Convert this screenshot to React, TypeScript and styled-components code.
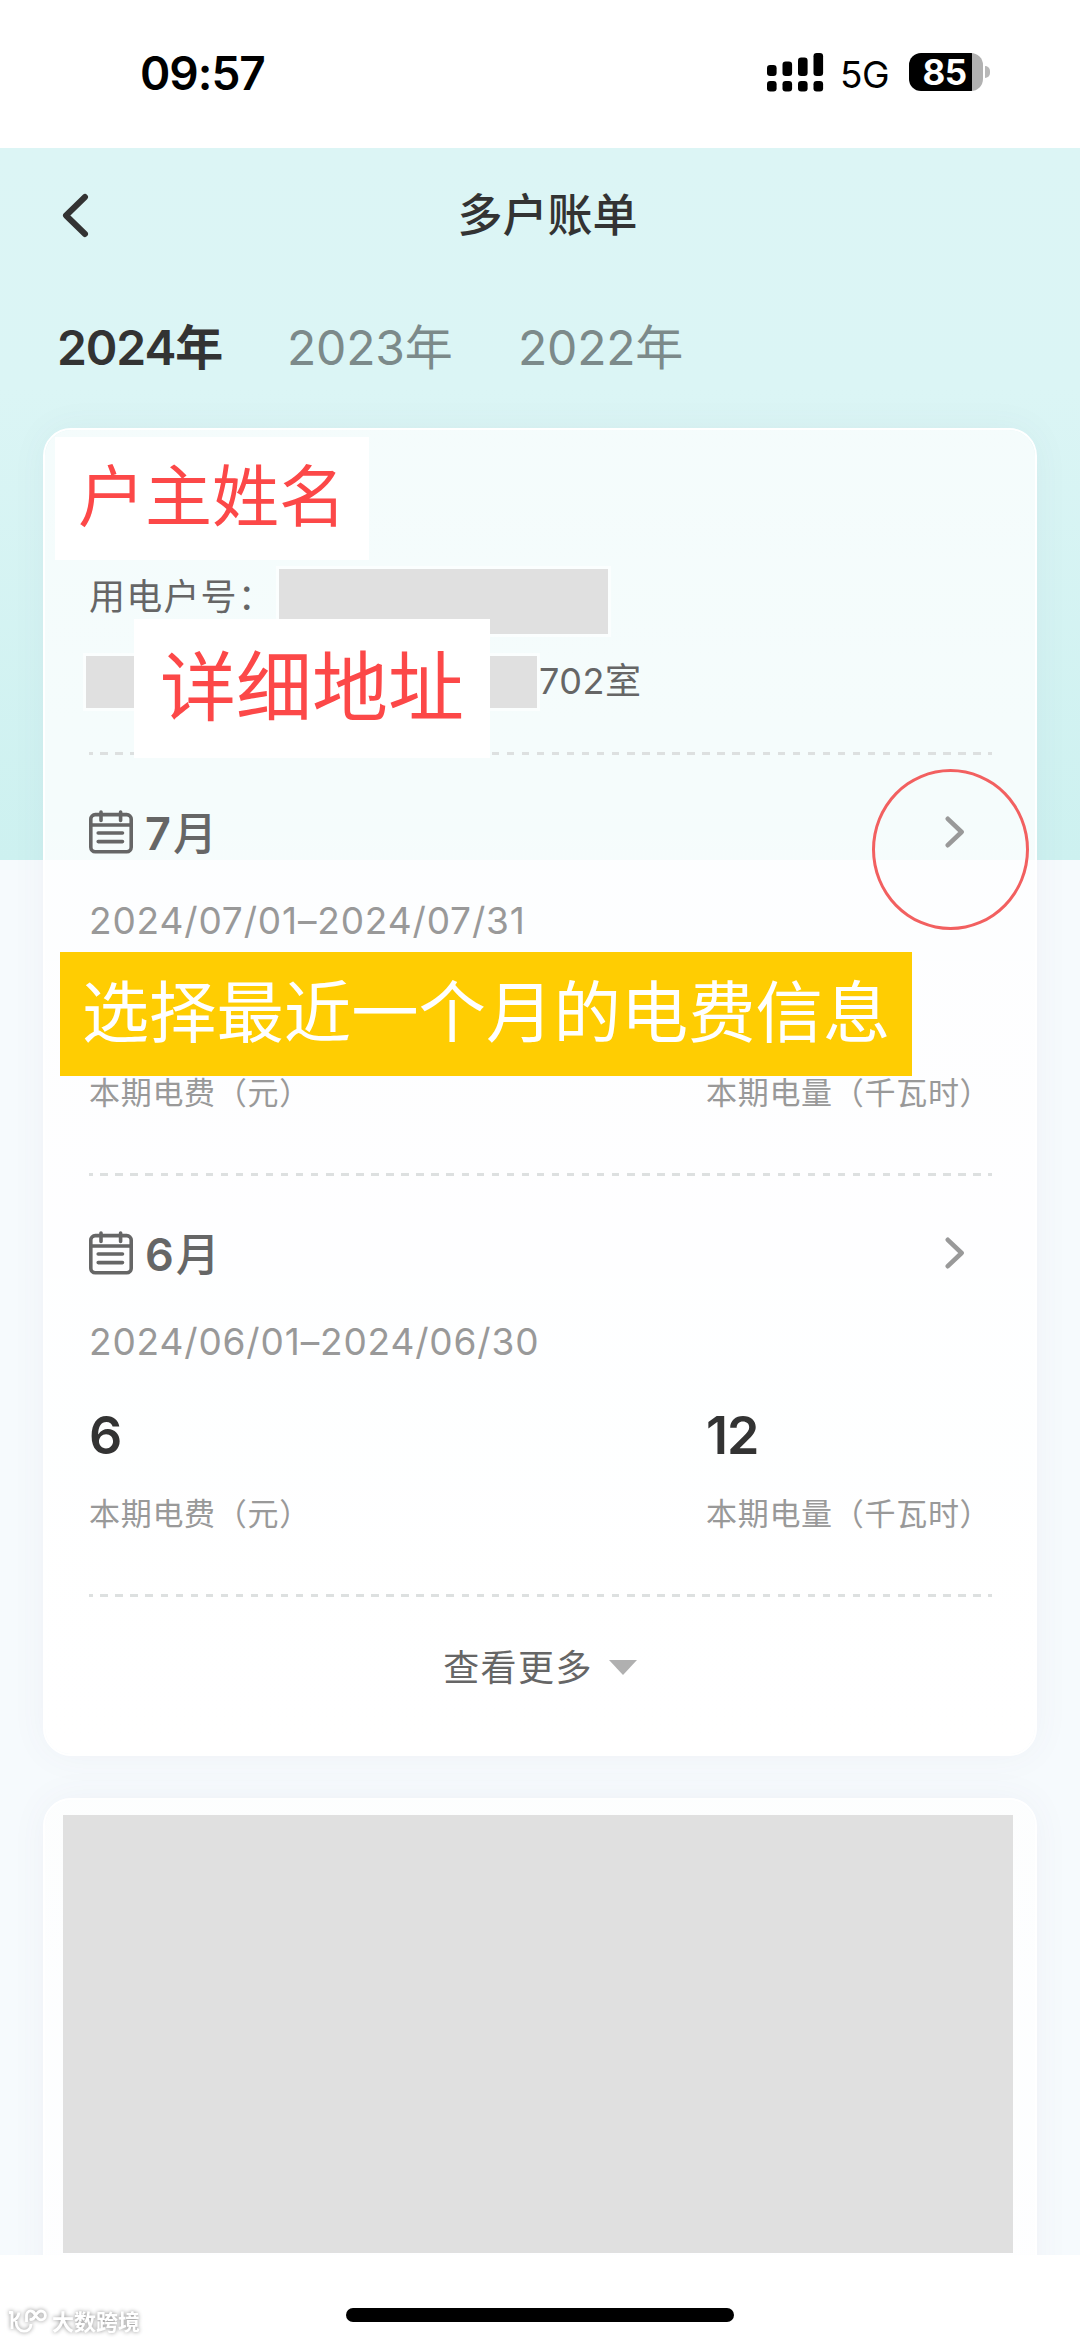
import React from "react";
import styled, { createGlobalStyle } from "styled-components";

const GlobalStyle = createGlobalStyle`
  * { box-sizing: border-box; }
  body {
    margin: 0;
    background: #fff;
    font-family: Inter, "Noto Sans CJK SC", sans-serif;
    color: #333;
  }
`;

const Screen = styled.div`
  position: relative;
  display: flex;
  flex-direction: column;
  width: 1080px;
  height: 2341px;
  overflow: hidden;
  background: #fff;
`;

const StatusBar = styled.header`
  display: flex;
  flex: none;
  justify-content: space-between;
  height: 148px;
  padding: 0 88px 0 140px;
  color: #000;
`;

const Clock = styled.time`
  height: 148px;
  font-size: 46px;
  font-weight: 600;
  line-height: 147px;
  letter-spacing: -1px;
`;

const StatusIcons = styled.div`
  display: flex;
  align-items: center;
  height: 144px;
  padding-right: 2px;
`;

const Network = styled.span`
  width: 67px;
  padding: 6px 0 0 16px;
  font-size: 37px;
  font-weight: 400;
  line-height: 40px;
  letter-spacing: -0.4px;
`;

const Battery = styled.div`
  display: flex;
  align-items: center;
  gap: 2px;
  margin-left: 18px;
`;

const BatteryBody = styled.div`
  width: 74px;
  height: 38px;
  padding: 0 3px 0 0;
  border-radius: 12px;
  background: linear-gradient(90deg, #000 0 63px, #b1b1b1 63px);
  color: #fff;
  font-size: 35px;
  font-weight: 700;
  line-height: 39px;
  text-align: center;
  letter-spacing: -0.5px;
`;

const BatteryTip = styled.div`
  width: 5px;
  height: 12px;
  border-radius: 0 6px 6px 0;
  background: #b8b8b8;
`;

const Page = styled.main`
  flex: none;
  height: 2107px;
  overflow: hidden;
  background: linear-gradient(180deg, #dcf5f5 0, #dbf5f5 240px, #cdf1f0 712px, #f6fafd 712px);
`;

const NavBar = styled.nav`
  display: grid;
  grid-template-columns: 60px 1fr 105px;
  align-items: center;
  height: 136px;
  padding: 0 0 1px 60px;
`;

const Title = styled.h1`
  margin: 0;
  font-size: 45px;
  font-weight: 500;
  line-height: 60px;
  text-align: center;
`;

const Tabs = styled.div`
  display: flex;
  height: 144px;
  padding-left: 57px;
`;

const Tab = styled.button<{ $active?: boolean }>`
  width: 231px;
  height: 128px;
  padding: 0;
  border: 0;
  background: none;
  color: ${(p) => (p.$active ? "#333" : "#7c8a8a")};
  font: ${(p) => (p.$active ? 600 : 400)} 48px/126px Inter, "Noto Sans CJK SC", sans-serif;
  letter-spacing: ${(p) => (p.$active ? "-1.1px" : "-0.2px")};
  text-indent: ${(p) => (p.$active ? "0" : "-1px")};
  text-align: left;
  white-space: nowrap;
`;

const Card = styled.section<{ $height: number }>`
  width: 994px;
  height: ${(p) => p.$height}px;
  margin: 0 0 42px 43px;
  border: 2px solid #fff;
  border-radius: 28px;
  background: linear-gradient(180deg, rgba(255, 255, 255, 0.72), #fff) padding-box;
  box-shadow: 0 0 36px rgba(90, 70, 120, 0.05);
`;

const Account = styled.div`
  height: 322px;
  padding: 139px 0 0 41px;
  color: #666;
  font-size: 36px;
`;

const AccountLine = styled.div`
  display: flex;
  align-items: flex-start;
  height: 87px;
`;

const AccountLabel = styled.span`
  width: 193px;
  padding-left: 3px;
  line-height: 56px;
  letter-spacing: 1.2px;
`;

const Redaction = styled.span<{ $w: number; $h: number }>`
  width: ${(p) => p.$w}px;
  height: ${(p) => p.$h}px;
  outline: 3px solid rgba(255, 255, 255, 0.6);
  background: #e0e0e0;
`;

const Room = styled.span`
  padding-left: 2px;
  line-height: 50px;
  letter-spacing: 0.5px;
`;

const Divider = styled.hr`
  width: 903px;
  height: 3px;
  margin: 0 0 0 44px;
  border: 0;
  background: repeating-linear-gradient(90deg, #dde0e0 0 3.7px, transparent 3.7px 11.3px, #dde0e0 11.3px 15.05px);
`;

const Bill = styled.article`
  height: 418px;
  padding: 47px 44px 0 44px;
`;

const BillHead = styled.div`
  display: flex;
  align-items: center;
  height: 60px;
  padding-right: 26px;
`;

const Month = styled.h2`
  flex: 1;
  margin: 0;
  padding-left: 12px;
  color: #666;
  font-size: 45px;
  font-weight: 600;
  line-height: 58px;
`;

const MonthUnit = styled.span`
  margin-left: 2px;
  font-family: "Noto Sans CJK SC", sans-serif;
  font-size: 44px;
  font-weight: 500;
`;

const Period = styled.p`
  margin: 31px 0 0;
  color: #999;
  font-size: 37px;
  line-height: 56px;
  letter-spacing: 0.85px;
`;

const Figures = styled.div`
  display: grid;
  grid-template-columns: 617px 1fr;
  margin-top: 31px;
`;

const Amount = styled.div`
  height: 70px;
  color: #333;
  font-size: 52px;
  font-weight: 600;
  line-height: 70px;
  letter-spacing: -1px;
`;

const Caption = styled.div`
  margin-top: 23px;
  color: #999;
  font-size: 31px;
  line-height: 40px;
  letter-spacing: 0.7px;
  white-space: nowrap;
`;

const More = styled.button`
  display: flex;
  align-items: center;
  justify-content: center;
  gap: 16px;
  width: 100%;
  height: 140px;
  padding: 0;
  border: 0;
  background: none;
  color: #666;
  font: 400 36px/136px "Noto Sans CJK SC", sans-serif;
  letter-spacing: 1.4px;
`;

const MoreLabel = styled.span`
  height: 140px;
`;

const HiddenBill = styled.div`
  width: 950px;
  height: 438px;
  margin: 15px 0 0 18px;
  background: #e0e0e0;
`;

const HomeArea = styled.footer`
  display: flex;
  flex: 1;
  align-items: flex-start;
  background: #fff;
`;

const Watermark = styled.div`
  display: flex;
  align-items: center;
  width: 346px;
  padding: 52px 0 0 8px;
  filter: drop-shadow(0 0 2px rgba(0, 0, 0, 0.45));
`;

const WatermarkText = styled.span`
  padding-left: 4px;
  color: #fff;
  font-size: 22px;
  font-weight: 700;
  line-height: 30px;
`;

const HomeIndicator = styled.div`
  width: 388px;
  height: 14px;
  margin-top: 53px;
  border-radius: 7px;
  background: #000;
`;

const Note = styled.div<{ $x: number; $y: number; $w: number; $h: number; $size: number; $fill?: string }>`
  position: absolute;
  left: ${(p) => p.$x}px;
  top: ${(p) => p.$y}px;
  width: ${(p) => p.$w}px;
  height: ${(p) => p.$h}px;
  background: ${(p) => p.$fill ?? "#fff"};
  color: ${(p) => (p.$fill ? "#fff" : "#fc4848")};
  font-size: ${(p) => p.$size}px;
  line-height: ${(p) => p.$h - 3}px;
  text-align: center;
  white-space: nowrap;
`;

const Ring = styled.div`
  position: absolute;
  left: 872px;
  top: 769px;
  width: 157px;
  height: 161px;
  border: 3px solid #f26060;
  border-radius: 50%;
`;

const SignalIcon = () => (
  <svg width="57" height="39" viewBox="0 0 57 39">
    {[12, 8.5, 4.5, 0].map((y, i) => (
      <g key={y}>
        <rect x={i * 15.5} y={y} width="9.6" height={23 - y} rx="3.2" />
        <rect x={i * 15.5} y="28" width="9.6" height="10.5" rx="3.2" />
      </g>
    ))}
  </svg>
);

const BackIcon = () => (
  <svg width="30" height="46" viewBox="0 0 30 46" fill="none" stroke="#333" strokeWidth="6" strokeLinecap="round" strokeLinejoin="round">
    <path d="M25 4 6 22.5 25 41" />
  </svg>
);

const CalendarIcon = () => (
  <svg width="44" height="44" viewBox="0 0 44 44" fill="none" stroke="#666" strokeWidth="3.6" strokeLinecap="round">
    <rect x="1.8" y="4.6" width="40.4" height="37.2" rx="4.5" />
    <path d="M2 15H42M12 2V10.5M31.6 2V10.5M9.2 23H33.5M9.2 31.6H33.5" />
  </svg>
);

const NextIcon = () => (
  <svg width="20" height="32" viewBox="0 0 20 32" fill="none" stroke="#999" strokeWidth="4.6" strokeLinecap="round" strokeLinejoin="round">
    <path d="M2.8 2.8 16.6 16 2.8 29.2" />
  </svg>
);

const LogoIcon = () => (
  <svg width="40" height="30" viewBox="0 0 40 30" fill="none" stroke="#fff" strokeWidth="2.8" strokeLinejoin="round">
    <path d="M1 5.5H4V22M4 14Q10 12 11 5.5M8 14C8 27 23 27 23 17" />
    <path d="M18.5 15V8.5A4.3 4.3 0 1 1 22.8 12.5C27 12.5 28 4 33 4A4.4 4.4 0 0 1 33 12.8C28 12.8 27 4.2 22.8 4.2" />
  </svg>
);

type BillProps = { month: string; period: string; fee?: string; usage?: string };

const BillItem = ({ month, period, fee, usage }: BillProps) => (
  <Bill>
    <BillHead>
      <CalendarIcon />
      <Month>
        {month}
        <MonthUnit>月</MonthUnit>
      </Month>
      <NextIcon />
    </BillHead>
    <Period>{period}</Period>
    <Figures>
      <div>
        <Amount>{fee}</Amount>
        <Caption>本期电费（元）</Caption>
      </div>
      <div>
        <Amount>{usage}</Amount>
        <Caption>本期电量（千瓦时）</Caption>
      </div>
    </Figures>
  </Bill>
);

export default function App() {
  return (
    <>
      <GlobalStyle />
      <Screen lang="zh-CN">
        <StatusBar>
          <Clock>09:57</Clock>
          <StatusIcons>
            <SignalIcon />
            <Network>5G</Network>
            <Battery>
              <BatteryBody>85</BatteryBody>
              <BatteryTip />
            </Battery>
          </StatusIcons>
        </StatusBar>
        <Page>
          <NavBar>
            <BackIcon />
            <Title>多户账单</Title>
          </NavBar>
          <Tabs>
            <Tab $active>2024年</Tab>
            <Tab>2023年</Tab>
            <Tab>2022年</Tab>
          </Tabs>
          <Card $height={1328}>
            <Account>
              <AccountLine>
                <AccountLabel>用电户号：</AccountLabel>
                <Redaction $w={329} $h={65} />
              </AccountLine>
              <AccountLine>
                <Redaction $w={451} $h={52} />
                <Room>702室</Room>
              </AccountLine>
            </Account>
            <Divider />
            <BillItem month="7" period="2024/07/01–2024/07/31" />
            <Divider />
            <BillItem month="6" period="2024/06/01–2024/06/30" fee="6" usage="12" />
            <Divider />
            <More>
              <MoreLabel>查看更多</MoreLabel>
              <svg width="28" height="15" viewBox="0 0 28 15" fill="#b0b0b0">
                <path d="M0 0H28L14 15Z" />
              </svg>
            </More>
          </Card>
          <Card $height={900}>
            <HiddenBill />
          </Card>
        </Page>
        <HomeArea>
          <Watermark>
            <LogoIcon />
            <WatermarkText>大数跨境</WatermarkText>
          </Watermark>
          <HomeIndicator />
        </HomeArea>
        <Note $x={55} $y={437} $w={314} $h={123} $size={67}>户主姓名</Note>
        <Note $x={134} $y={619} $w={356} $h={139} $size={76}>详细地址</Note>
        <Note $x={60} $y={952} $w={852} $h={124} $size={67.4} $fill="#ffcd02">选择最近一个月的电费信息</Note>
        <Ring />
      </Screen>
    </>
  );
}
